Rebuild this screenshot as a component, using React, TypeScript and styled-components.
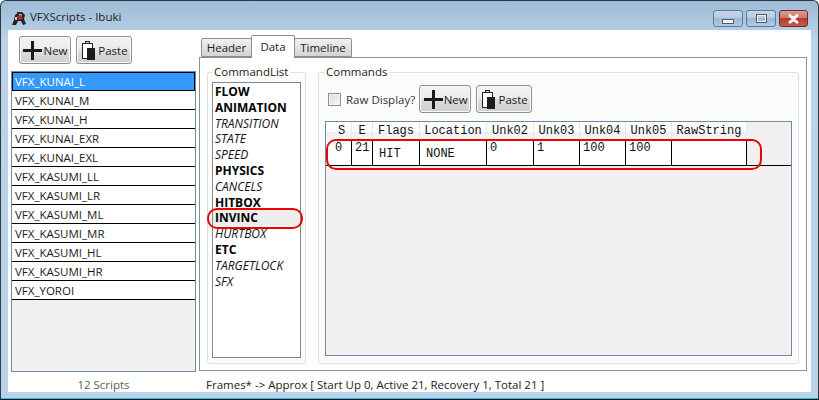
import React from 'react'
import styled, { createGlobalStyle } from 'styled-components'

const GlobalStyle = createGlobalStyle`
  html, body { margin: 0; padding: 0; background: #fff; }
  body { font-family: "Open Sans", "Liberation Sans", sans-serif; font-size: 11.5px; color: #1a1a1a; }
`

const Window = styled.div`
  width: 819px;
  height: 400px;
  box-sizing: border-box;
  border: 1px solid #2d3a44;
  border-bottom-color: #111;
  border-radius: 6px 6px 0 0;
  background: linear-gradient(180deg, #9dbbd6 0, #bcd3e9 40px, #b9d1ea 100%);
  box-shadow: inset 0 -1px 0 #19c6e6;
  display: flex;
  flex-direction: column;
  overflow: hidden;
`

const TitleBar = styled.div`
  height: 29px;
  flex: none;
  display: flex;
  align-items: flex-start;
  padding: 0 10px 0 10px;
`

const TitleText = styled.span`
  margin: 8px 0 0 3px;
  font-size: 11.5px;
  color: #222;
`

const WinButtons = styled.div`
  margin: 9px 0 0 auto;
  display: flex;
  gap: 3px;
`

const WinButton = styled.div<{ $w: number; $close?: boolean }>`
  width: ${(p) => p.$w}px;
  height: 17px;
  box-sizing: border-box;
  border: 1px solid ${(p) => (p.$close ? '#6e2a30' : '#5d7a96')};
  border-radius: 3px;
  display: flex;
  align-items: center;
  justify-content: center;
  background: ${(p) =>
    p.$close
      ? 'linear-gradient(180deg, #dc9a90 0, #cf7a6d 45%, #b93a2b 50%, #c9584a 100%)'
      : 'linear-gradient(180deg, #c6d8ea 0, #b4cbe1 45%, #9db8d2 50%, #b2cbe2 100%)'};
`

const Body = styled.div`
  flex: 1;
  margin: 0 7px 7px 7px;
  background: #fff;
  display: flex;
  min-height: 0;
`

const LeftColumn = styled.div`
  width: 188px;
  flex: none;
  margin-left: 3px;
  display: flex;
  flex-direction: column;
`

const ButtonRow = styled.div`
  display: flex;
  gap: 5px;
  padding-left: 8px;
  margin-top: 6px;
  align-items: center;
`

const ToolButton = styled.div<{ $w: number }>`
  width: ${(p) => p.$w}px;
  height: 28px;
  box-sizing: border-box;
  border: 1px solid #8e8f8f;
  border-radius: 3px;
  background: linear-gradient(180deg, #f3f3f3 0, #ebebeb 48%, #dddddd 50%, #cfcfcf 100%);
  box-shadow: inset 0 0 0 1px #fafafa;
  display: flex;
  align-items: center;
  justify-content: center;
  font-size: 11.5px;
  color: #222;
`

const ScriptList = styled.div`
  margin-top: 7px;
  height: 301px;
  width: 185px;
  box-sizing: border-box;
  border: 1px solid #6d8aa5;
  background: #f0f0f0;
`

const ScriptRow = styled.div<{ $active?: boolean }>`
  height: 19px;
  box-sizing: border-box;
  overflow: hidden;
  line-height: ${(p) => (p.$active ? 18 : 20)}px;
  background: ${(p) => (p.$active ? '#3399ff' : '#fff')};
  color: ${(p) => (p.$active ? '#fff' : '#1a1a1a')};
  border-bottom: 1px solid #000;
  border-top: ${(p) => (p.$active ? '1px solid #000' : 'none')};
  border-left: ${(p) => (p.$active ? '1px solid #000' : 'none')};
  border-right: ${(p) => (p.$active ? '1px solid #000' : 'none')};
  padding-left: ${(p) => (p.$active ? '2px' : '3px')};
`

const StatusCount = styled.div`
  text-align: center;
  color: #5e5e5e;
  margin-top: 5px;
  width: 185px;
  font-weight: 500;
`

const RightColumn = styled.div`
  flex: 1;
  display: flex;
  flex-direction: column;
  min-width: 0;
`

const Tabs = styled.div`
  display: flex;
  align-items: flex-end;
  height: 27px;
  padding-left: 3px;
`

const Tab = styled.div<{ $w: number; $active?: boolean }>`
  width: ${(p) => p.$w}px;
  height: ${(p) => (p.$active ? 23 : 19)}px;
  box-sizing: border-box;
  border: 1px solid #8e8e8e;
  border-bottom: ${(p) => (p.$active ? 'none' : '1px solid #8e8e8e')};
  margin-left: -1px;
  margin-bottom: ${(p) => (p.$active ? -1 : 0)}px;
  padding-bottom: ${(p) => (p.$active ? 2 : 0)}px;
  border-radius: 2px 2px 0 0;
  background: ${(p) => (p.$active ? '#fff' : 'linear-gradient(180deg, #f2f2f2 0, #e2e2e2 50%, #d4d4d4 100%)')};
  position: relative;
  z-index: ${(p) => (p.$active ? 1 : 0)};
  display: flex;
  align-items: center;
  justify-content: center;
  color: #222;
`

const TabPanel = styled.div`
  width: 608px;
  height: 314px;
  box-sizing: border-box;
  border: 1px solid #8e8e8e;
  background: #fff;
  display: flex;
  gap: 12px;
  padding: 6px 7px 6px 7px;
`

const Group = styled.fieldset<{ $w: number; $pad: string }>`
  width: ${(p) => p.$w}px;
  box-sizing: border-box;
  margin: 0;
  padding: ${(p) => p.$pad};
  border: 1px solid #d5dfe5;
  border-radius: 3px;
  background: #fbfbfb;
  box-shadow: inset 0 0 0 1px #fff;
  display: flex;
  flex-direction: column;
  min-width: 0;
`

const GroupLabel = styled.legend<{ $x: number }>`
  padding: 0 2px;
  margin-left: ${(p) => p.$x}px;
  font-size: 11.5px;
  line-height: 16px;
  color: #222;
`

const CommandList = styled.div`
  flex: 1;
  position: relative;
  box-sizing: border-box;
  border: 1px solid #828790;
  background: #fff;
  padding-top: 1px;
`

const CommandRow = styled.div<{ $bold?: boolean; $selected?: boolean }>`
  height: 15.8px;
  line-height: 15.8px;
  padding-left: 2px;
  font-size: 12px;
  font-weight: ${(p) => (p.$bold ? 700 : 400)};
  font-style: ${(p) => (p.$bold ? 'normal' : 'italic')};
  background: ${(p) => (p.$selected ? '#eeeeee' : 'transparent')};
  color: ${(p) => (p.$bold ? '#000' : '#111')};
`

const Ring = styled.div<{ $l: number; $t: number; $w: number; $h: number; $r: number }>`
  position: absolute;
  left: ${(p) => p.$l}px;
  top: ${(p) => p.$t}px;
  width: ${(p) => p.$w}px;
  height: ${(p) => p.$h}px;
  box-sizing: border-box;
  border: 2px solid #ee0000;
  border-radius: ${(p) => p.$r}px;
  pointer-events: none;
`

const CommandsTools = styled.div`
  height: 28px;
  display: flex;
  align-items: center;
  gap: 5px;
  margin-top: 3px;
  padding-left: 3px;
`

const CheckLabel = styled.label`
  display: flex;
  align-items: center;
  gap: 5px;
  margin-right: -1px;
  color: #333;
`

const CheckBox = styled.span`
  width: 13px;
  height: 13px;
  box-sizing: border-box;
  border: 1px solid #8e8f8f;
  background: linear-gradient(135deg, #dcdcdc, #f6f6f6);
  box-shadow: inset 0 0 0 1px #f4f4f4;
`

const Grid = styled.div`
  flex: 1;
  position: relative;
  margin-top: 8px;
  box-sizing: border-box;
  border: 1px solid #6d8aa5;
  background: #f0f0f0;
  font-family: "Liberation Mono", "DejaVu Sans Mono", monospace;
  font-size: 12px;
  color: #111;
`

const GridRow = styled.div`
  display: flex;
`

const HeadGutter = styled.div`
  width: 6px;
  height: 19px;
  background: linear-gradient(180deg, #fff 0, #fff 50%, #eef0f2 55%, #f4f5f6 100%);
`

const RowGutter = styled.div`
  width: 7px;
  margin-right: -1px;
  height: 25px;
  box-sizing: border-box;
  background: #fff;
  border-right: 1px solid #c9dcec;
  border-bottom: 1px solid #000;
`

const HeadCell = styled.div<{ $w: number }>`
  width: ${(p) => p.$w}px;
  height: 19px;
  box-sizing: border-box;
  line-height: 19px;
  text-align: center;
  background: linear-gradient(180deg, #fff 0, #fff 50%, #eef0f2 55%, #f4f5f6 100%);
  border-right: 1px solid #e6e8ea;
`

const DataCell = styled.div<{ $w: number; $mid?: boolean }>`
  width: ${(p) => p.$w}px;
  height: 25px;
  box-sizing: border-box;
  padding: ${(p) => (p.$mid ? '6px 0 0 6px' : '0 0 0 3px')};
  line-height: 14px;
  background: #fff;
  border-right: 1px solid #000;
  border-bottom: 1px solid #000;
`

const RowFill = styled.div`
  flex: 1;
  height: 25px;
  box-sizing: border-box;
  background: #f0f0f0;
  border-bottom: 1px solid #000;
`

const FooterText = styled.div`
  margin: 6px 0 0 7px;
  color: #222;
`

const PlusIcon = () => (
  <svg width="21" height="21" viewBox="0 0 21 21">
    <path d="M9 1h3v8h8v3h-8v8H9v-8H1V9h8z" fill="#1a1a1a" />
  </svg>
)

const PasteIcon = () => (
  <svg width="13" height="19" viewBox="0 0 13 19" style={{ margin: '0 3px 0 2px' }}>
    <rect x="0.500" y="2.500" width="10" height="15" fill="#fff" stroke="#222" />
    <rect x="3.500" y="0.500" width="4" height="2" fill="#ddd" stroke="#222" />
    <rect x="5" y="7" width="8" height="12" fill="#1c1c1c" />
  </svg>
)

const Logo = () => (
  <svg width="15" height="15" viewBox="0 0 15 15" style={{ margin: '10px 0 0 1px' }}>
    <path d="M0 14l2-5 1-5 3-2 4-1 3 3-1 4 2 5-3 1-2-4-3 0-2 4z" fill="#1f2028" />
    <path d="M5 1h4v3H5z" fill="#3a2a30" />
    <path d="M7 3h3v2.500H7z" fill="#d99a84" />
    <path d="M5 5l5-1 1 4-5 1z" fill="#b3312c" />
    <path d="M3 6h2v3H3z" fill="#c9c9d4" />
  </svg>
)

const scripts = [
  'VFX_KUNAI_L', 'VFX_KUNAI_M', 'VFX_KUNAI_H', 'VFX_KUNAI_EXR', 'VFX_KUNAI_EXL', 'VFX_KASUMI_LL',
  'VFX_KASUMI_LR', 'VFX_KASUMI_ML', 'VFX_KASUMI_MR', 'VFX_KASUMI_HL', 'VFX_KASUMI_HR', 'VFX_YOROI',
]

const commands: [string, boolean][] = [
  ['FLOW', true], ['ANIMATION', true], ['TRANSITION', false], ['STATE', false], ['SPEED', false],
  ['PHYSICS', true], ['CANCELS', false], ['HITBOX', true], ['INVINC', true], ['HURTBOX', false],
  ['ETC', true], ['TARGETLOCK', false], ['SFX', false],
]

const columns: { name: string; w: number; value: string; mid?: boolean }[] = [
  { name: 'S', w: 20, value: '0' },
  { name: 'E', w: 21, value: '21' },
  { name: 'Flags', w: 47, value: 'HIT', mid: true },
  { name: 'Location', w: 67, value: 'NONE', mid: true },
  { name: 'Unk02', w: 47, value: '0' },
  { name: 'Unk03', w: 46, value: '1' },
  { name: 'Unk04', w: 46, value: '100' },
  { name: 'Unk05', w: 46, value: '100' },
  { name: 'RawString', w: 75, value: '' },
]

const App: React.FC = () => {
  return (
    <>
      <GlobalStyle />
      <Window>
        <TitleBar>
          <Logo />
          <TitleText>VFXScripts - Ibuki</TitleText>
          <WinButtons>
            <WinButton $w={30}>
              <svg width="12" height="13"><rect x="0.500" y="7.500" width="11" height="4" fill="#eef3f8" stroke="#4d5a68" /></svg>
            </WinButton>
            <WinButton $w={30}>
              <svg width="11" height="9"><rect x="1" y="1" width="9" height="7" fill="none" stroke="#eef3f8" strokeWidth="2" /><rect x="0.500" y="0.500" width="10" height="8" fill="none" stroke="#4d5a68" /></svg>
            </WinButton>
            <WinButton $w={29} $close>
              <svg width="13" height="10"><path d="M2 1l4.500 3 4.500-3M2 9l4.500-3 4.500 3M2 1l9 8M11 1l-9 8" stroke="#f4f4f4" strokeWidth="2.500" fill="none" /></svg>
            </WinButton>
          </WinButtons>
        </TitleBar>
        <Body>
          <LeftColumn>
            <ButtonRow>
              <ToolButton $w={52}><PlusIcon />New</ToolButton>
              <ToolButton $w={56}><PasteIcon />Paste</ToolButton>
            </ButtonRow>
            <ScriptList>
              {scripts.map((s, i) => (
                <ScriptRow key={s} $active={i === 0}>{s}</ScriptRow>
              ))}
            </ScriptList>
            <StatusCount>12 Scripts</StatusCount>
          </LeftColumn>
          <RightColumn>
            <Tabs>
              <Tab $w={51}>Header</Tab>
              <Tab $w={44} $active>Data</Tab>
              <Tab $w={58}>Timeline</Tab>
            </Tabs>
            <TabPanel>
              <Group $w={99} $pad="2px 4px 5px 4px">
                <GroupLabel $x={0}>CommandList</GroupLabel>
                <CommandList>
                  {commands.map(([name, bold]) => (
                    <CommandRow key={name} $bold={bold} $selected={name === 'INVINC'}>{name}</CommandRow>
                  ))}
                  <Ring $l={-6} $t={125} $w={96} $h={21} $r={10} />
                </CommandList>
              </Group>
              <Group $w={481} $pad="2px 6px 7px 6px">
                <GroupLabel $x={-1}>Commands</GroupLabel>
                <CommandsTools>
                  <CheckLabel><CheckBox />Raw Display?</CheckLabel>
                  <ToolButton $w={52}><PlusIcon />New</ToolButton>
                  <ToolButton $w={56}><PasteIcon />Paste</ToolButton>
                </CommandsTools>
                <Grid>
                  <GridRow>
                    <HeadGutter />
                    {columns.map((c) => (
                      <HeadCell key={c.name} $w={c.w}>{c.name}</HeadCell>
                    ))}
                  </GridRow>
                  <GridRow>
                    <RowGutter />
                    {columns.map((c) => (
                      <DataCell key={c.name} $w={c.w} $mid={c.mid}>{c.value}</DataCell>
                    ))}
                    <RowFill />
                  </GridRow>
                  <Ring $l={0} $t={17} $w={436} $h={31} $r={10} />
                </Grid>
              </Group>
            </TabPanel>
            <FooterText>Frames* -&gt; Approx [ Start Up 0, Active 21, Recovery 1, Total 21 ]</FooterText>
          </RightColumn>
        </Body>
      </Window>
    </>
  )
}

export default App
